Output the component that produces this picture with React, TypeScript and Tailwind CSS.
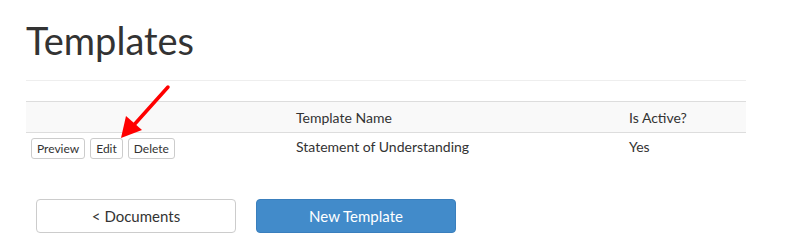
const font = { fontFamily: "Lato, 'Open Sans', sans-serif" }

function SmallButton({ label }: { label: string }) {
  return (
    <button className="h-[21px] px-[5px] rounded-[3px] border border-[#ccc] bg-white text-[12px] leading-none text-[#333]">
      {label}
    </button>
  )
}

export default function App() {
  return (
    <div className="relative w-[786px] h-[248px] bg-white text-[#333]" style={font}>
      <div className="pl-[26px] pr-[40px]">
        <h1 className="pt-[17px] h-[80px] text-[38px] leading-[46px] font-normal text-[#333]">Templates</h1>
        <div className="border-t border-[#eee]" />

        <div className="mt-[20px] text-[14px]">
          <div className="grid grid-cols-[265px_333px_1fr] h-[32px] items-center bg-[#f9f9f9] border-y border-[#ddd]">
            <div className="pl-[5px]" />
            <div className="pl-[5px]">Template Name</div>
            <div className="pl-[5px]">Is Active?</div>
          </div>
          <div className="grid grid-cols-[265px_333px_1fr] items-center pt-[5px]">
            <div className="pl-[5px] flex gap-[5px]">
              <SmallButton label="Preview" />
              <SmallButton label="Edit" />
              <SmallButton label="Delete" />
            </div>
            <div className="pl-[5px] -mt-[4px]">Statement of Understanding</div>
            <div className="pl-[5px] -mt-[4px]">Yes</div>
          </div>
        </div>

        <div className="mt-[40px] pl-[10px] flex gap-[20px]">
          <button className="w-[200px] h-[34px] rounded-[4px] border border-[#ccc] bg-white text-[15px] text-[#333]">
            &lt; Documents
          </button>
          <button className="w-[200px] h-[34px] rounded-[4px] border border-[#3a7fbd] bg-[#428bca] text-[15px] text-white">
            New Template
          </button>
        </div>
      </div>

      {/* red annotation arrow */}
      <svg className="absolute left-0 top-0 pointer-events-none" width="786" height="248">
        <line x1="168" y1="87" x2="133" y2="126" stroke="#f00" strokeWidth="3.5" strokeLinecap="round" />
        <polygon points="121,138 126,116 142,130" fill="#f00" />
      </svg>
    </div>
  )
}
